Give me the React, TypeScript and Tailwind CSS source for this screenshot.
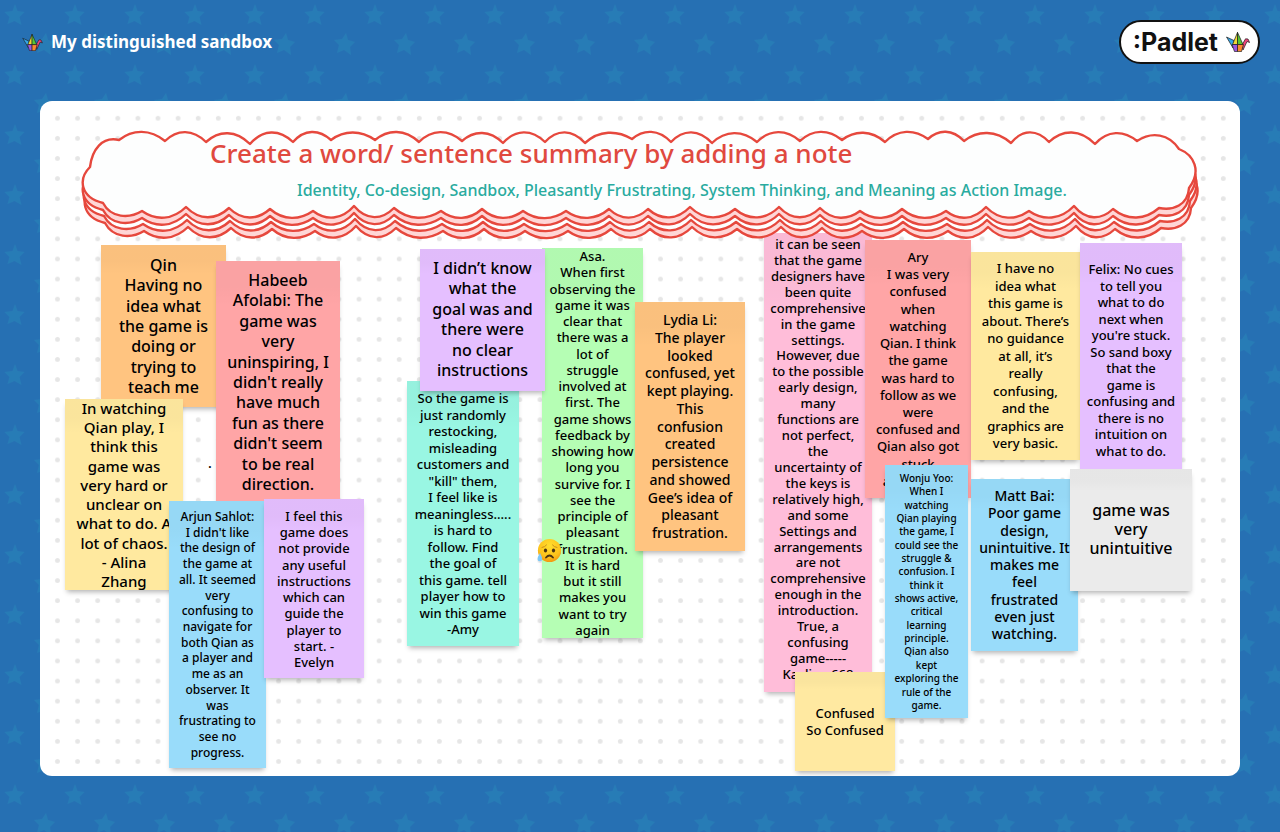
type Point = [number, number];

const TOP: Point[] = [
  [119, 140], [165, 141], [206, 142], [250, 144], [293, 142], [331, 140], [375, 140],
  [419, 142], [462, 141], [503, 143], [545, 142], [585, 143], [632, 139], [671, 142],
  [712, 143], [757, 142], [800, 141], [842, 140], [885, 142], [928, 139], [964, 141],
  [1011, 143], [1049, 142], [1095, 144], [1137, 141],
];
const BOTTOM: Point[] = [
  [1159, 208], [1113, 209], [1074, 206], [1029, 211], [986, 207], [946, 211], [902, 209],
  [860, 211], [820, 208], [779, 207], [735, 209], [690, 207], [648, 209], [609, 209],
  [566, 211], [523, 211], [482, 209], [441, 211], [394, 208], [354, 206], [313, 211],
  [270, 209], [229, 208], [186, 207], [142, 211],
];

function cloudPath() {
  let d = "M90 167C92 150 102 136 119 140";
  for (let i = 1; i < TOP.length; i++) {
    const [ax] = TOP[i - 1];
    const [bx, by] = TOP[i];
    const y = i % 3 === 0 ? 130 : 129;
    d += `C${ax + (bx - ax) * 0.3} ${y} ${ax + (bx - ax) * 0.68} ${y} ${bx} ${by}`;
  }
  d += "C1152 131 1169 134 1179 149C1194 155 1202 171 1189 188C1188 205 1173 211 1159 208";
  for (let i = 1; i < BOTTOM.length; i++) {
    const [ax] = BOTTOM[i - 1];
    const [bx, by] = BOTTOM[i];
    d += `C${ax + (bx - ax) * 0.3} 220 ${ax + (bx - ax) * 0.68} 221 ${bx} ${by}`;
  }
  return d + "C129 219 111 218 103 203C80 197 78 179 90 167Z";
}

const CLOUD = cloudPath();

function Cloud() {
  return (
    <svg className="absolute left-[35px] top-[24px]" width="1140" height="120" viewBox="75 125 1140 120" aria-hidden="true">
      <g stroke="#e6483d" strokeWidth="2.4" strokeLinejoin="round">
        <path d={CLOUD} fill="#ffd6d6" transform="translate(2 20)" />
        <path d={CLOUD} fill="#fefefe" transform="translate(1 13)" />
        <path d={CLOUD} fill="#ffd6d6" transform="translate(0 7)" />
        <path d={CLOUD} fill="#fdfefe" />
      </g>
    </svg>
  );
}

function Dots() {
  return (
    <svg className="absolute inset-0 h-full w-full" aria-hidden="true">
      <defs>
        <pattern id="dots" width="20.1" height="20.1" patternUnits="userSpaceOnUse" x="7.5" y="7.2">
          <circle cx="10" cy="10" r="2.4" fill="#e6e6e6" />
        </pattern>
      </defs>
      <rect width="100%" height="100%" fill="url(#dots)" />
    </svg>
  );
}

function Stars() {
  return (
    <svg className="absolute inset-0 h-full w-full" aria-hidden="true">
      <defs>
        <pattern id="stars" width="60" height="60" patternUnits="userSpaceOnUse">
          <g fill="#277cb6">
            <path d="M15 4l2.500 7 7 1-5 5 2 8-7-4-7 3 2-7-5-5 8-1z" />
            <path d="M46 33l2 7 7 2-5 5 1 8-7-5-7 3 2-8-5-5 8-1z" />
          </g>
        </pattern>
      </defs>
      <rect width="100%" height="100%" fill="url(#stars)" />
    </svg>
  );
}

function Crane({ className }: { className: string }) {
  return (
    <svg className={className} viewBox="0 0 24 20" aria-hidden="true">
      <g stroke="#1b1b1b" strokeWidth="0.7" strokeLinejoin="round">
        <path d="M0.500 5L8 8.500L7 16Z" fill="#35a7e8" />
        <path d="M16 13L19.500 6.800L22 7L23.600 10.500L21 9.500L17 18Z" fill="#f0437c" />
        <path d="M11.500 0.400L6.500 12.500H11.500Z" fill="#f0d935" />
        <path d="M11.500 0.400L17 12.500H11.500Z" fill="#55c636" />
        <path d="M6 12.500H11.500V19.600H8.500Z" fill="#9a57e0" />
        <path d="M11.500 12.500H17.500L15.500 19.600H11.500Z" fill="#fb8832" />
      </g>
    </svg>
  );
}

function SadFace() {
  return (
    <svg className="absolute left-[497px] top-[437px] h-[25px] w-[25px]" viewBox="0 0 25 25" role="img" aria-label="Sad but relieved face">
      <defs>
        <radialGradient id="face" cx="0.5" cy="0.3" r="0.75">
          <stop offset="0" stopColor="#ffdf2e" />
          <stop offset="0.65" stopColor="#fcc21b" />
          <stop offset="1" stopColor="#f08a0c" />
        </radialGradient>
      </defs>
      <circle cx="12.500" cy="12.500" r="11.600" fill="url(#face)" />
      <ellipse cx="8.500" cy="12.500" rx="1.600" ry="2" fill="#4a3312" />
      <ellipse cx="16.500" cy="12.500" rx="1.600" ry="2" fill="#4a3312" />
      <path d="M5 9.500Q8 9 9.500 7M20 9.500Q17 9 15.500 7" stroke="#c98d1c" fill="none" strokeLinecap="round" />
      <path d="M9 19.500Q12.500 15.500 16 19.500" stroke="#4a3312" strokeWidth="1.800" fill="none" strokeLinecap="round" />
      <path d="M3 15Q0.500 19 0.500 21A2.300 2.300 0 0 0 5.200 21Q5.200 19 3 15Z" fill="#7cc8f5" />
    </svg>
  );
}

type NoteData = { box: string; text: string };

const BEHIND: NoteData = {
  box: "left-[724px] top-[132px] w-[108px] h-[459px] pt-[5px] pb-[12px] text-[13px] bg-[#ffbdd9]",
  text: "it can be seen|that the game|designers have|been quite|comprehensive|in the game|settings.|However, due|to the possible|early design,|many|functions are|not perfect,|the|uncertainty of|the keys is|relatively high,|and some|Settings and|arrangements|are not|comprehensive|enough in the|introduction.|True, a|confusing|game-----|Kaylina 668",
};

const NOTES: NoteData[] = [
  { box: "left-[61px] top-[144px] w-[125px] h-[162px] pt-[14px] pb-[14px] text-[16px] bg-[#ffc480]", text: "Qin|Having no|idea what|the game is|doing or|trying to|teach me" },
  { box: "left-[176px] top-[160px] w-[124px] h-[250px] pt-[13px] pb-[21px] text-[16px] bg-[#ffa5a6]", text: "Habeeb|Afolabi: The|game was|very|uninspiring, I|didn't really|have much|fun as there|didn't seem|to be real|direction." },
  { box: "left-[25px] top-[298px] w-[118px] h-[191px] pt-[3px] pb-[3px] text-[15px] bg-[#ffe99f]", text: "In watching|Qian play, I|think this|game was|very hard or|unclear on|what to do. A|lot of chaos.|- Alina|Zhang" },
  { box: "left-[129px] top-[400px] w-[97px] h-[267px] pt-[10px] pb-[9px] text-[12px] bg-[#99dcfa]", text: "Arjun Sahlot:|I didn't like|the design of|the game at|all. It seemed|very|confusing to|navigate for|both Qian as|a player and|me as an|observer. It|was|frustrating to|see no|progress." },
  { box: "left-[224px] top-[398px] w-[100px] h-[179px] pt-[11px] pb-[10px] text-[13px] bg-[#e5bfff]", text: "I feel this|game does|not provide|any useful|instructions|which can|guide the|player to|start. -|Evelyn" },
  { box: "left-[367px] top-[280px] w-[112px] h-[265px] pt-[11px] pb-[11px] text-[13px] bg-[#99f6e3]", text: "So the game is|just randomly|restocking,|misleading|customers and|\"kill\" them,|I feel like is|meaningless.....|is hard to|follow. Find|the goal of|this game. tell|player how to|win this game|-Amy" },
  { box: "left-[502px] top-[147px] w-[101px] h-[390px] pt-[2px] pb-[2px] text-[13px] bg-[#b5feb4]", text: "Asa.|When first|observing the|game it was|clear that|there was a|lot of|struggle|involved at|first. The|game shows|feedback by|showing how|long you|survive for. I|see the|principle of|pleasant|frustration.|It is hard|but it still|makes you|want to try|again" },
  { box: "left-[380px] top-[148px] w-[125px] h-[142px] pt-[13px] pb-[15px] text-[16px] bg-[#e5bfff]", text: "I didn’t know|what the|goal was and|there were|no clear|instructions" },
  { box: "left-[595px] top-[201px] w-[110px] h-[249px] pt-[12px] pb-[12px] text-[14px] bg-[#ffc480]", text: "Lydia Li:|The player|looked|confused, yet|kept playing.|This|confusion|created|persistence|and showed|Gee’s idea of|pleasant|frustration." },
  { box: "left-[825px] top-[139px] w-[106px] h-[258px] pt-[11px] pb-[11px] text-[13px] bg-[#ffa5a6]", text: "Ary|I was very|confused|when|watching|Qian. I think|the game|was hard to|follow as we|were|confused and|Qian also got|stuck|and unsure" },
  { box: "left-[931px] top-[151px] w-[109px] h-[208px] pt-[10px] pb-[11px] text-[13px] bg-[#ffe99f]", text: "I have no|idea what|this game is|about. There’s|no guidance|at all, it’s|really|confusing,|and the|graphics are|very basic." },
  { box: "left-[1040px] top-[142px] w-[102px] h-[228px] pt-[20px] pb-[14px] text-[13px] bg-[#e5bfff]", text: "Felix: No cues|to tell you|what to do|next when|you're stuck.|So sand boxy|that the|game is|confusing and|there is no|intuition on|what to do." },
  { box: "left-[931px] top-[378px] w-[107px] h-[172px] pt-[11px] pb-[11px] text-[14px] bg-[#99dcfa]", text: "Matt Bai:|Poor game|design,|unintuitive. It|makes me|feel|frustrated|even just|watching." },
  { box: "left-[1030px] top-[368px] w-[122px] h-[122px] pt-[35px] pb-[37px] text-[16px] bg-[#ebebeb]", text: "game was|very|unintuitive" },
  { box: "left-[755px] top-[571px] w-[100px] h-[99px] pt-[35px] pb-[35px] text-[13px] bg-[#ffe9a1]", text: "Confused|So Confused" },
  { box: "left-[845px] top-[364px] w-[83px] h-[253px] pt-[7px] pb-[7px] text-[10px] bg-[#99dcfa]", text: "Wonju Yoo:|When I|watching|Qian playing|the game, I|could see the|struggle &|confusion. I|think it|shows active,|critical|learning|principle.|Qian also|kept|exploring the|rule of the|game." },
];

function Note({ box, text }: NoteData) {
  return (
    <article className={`absolute flex flex-col items-center justify-between whitespace-nowrap bg-linear-to-b from-black/2 from-10% to-transparent to-18% leading-3 font-medium text-black shadow-[0_4px_5px_-2px_rgba(0,0,0,0.3)] ${box}`}>
      {text.split("|").map((line, i) => (
        <span key={i}>{line}</span>
      ))}
    </article>
  );
}

export default function App() {
  return (
    <div className="relative flex min-h-screen flex-col bg-[#2670b3] font-['Noto_Sans','Open_Sans',sans-serif]">
      <Stars />
      <header className="relative flex h-[101px] items-start justify-between px-5 pt-5">
        <div className="flex h-11 items-center gap-2">
          <Crane className="ml-[2px] h-[17px] w-[21px]" />
          <h1 className="text-[17px] leading-6 font-bold text-white">My distinguished sandbox</h1>
        </div>
        <a href="#" className="flex h-11 items-center gap-2 rounded-full border-2 border-[#111] bg-white pr-2 pl-3 text-[#111]">
          <span className="font-['Inter',sans-serif] text-[25px] leading-8 font-bold">:Padlet</span>
          <Crane className="h-5 w-6" />
        </a>
      </header>
      <main className="relative mx-10 mb-14 h-[675px] overflow-hidden rounded-xl bg-white">
        <Dots />
        <Note {...BEHIND} />
        <Cloud />
        <h2 className="absolute top-[36px] left-[170px] text-[26px] leading-8 font-medium whitespace-nowrap text-[#e0493f]">
          Create a word/ sentence summary by adding a note
        </h2>
        <p className="absolute top-[77px] left-[257px] text-[16px] leading-6 font-medium whitespace-nowrap text-[#29ab9f]">
          Identity, Co-design, Sandbox, Pleasantly Frustrating, System Thinking, and Meaning as Action Image.
        </p>
        <p className="absolute top-[354px] left-[168px] text-[14px] leading-4 font-medium">.</p>
        {NOTES.map((note) => (
          <Note key={note.box} {...note} />
        ))}
        <SadFace />
      </main>
    </div>
  );
}
